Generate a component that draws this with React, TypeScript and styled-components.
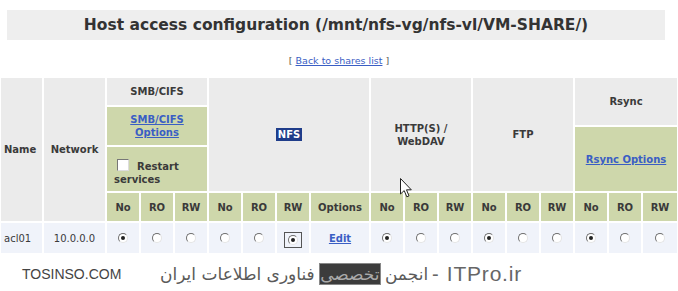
import React from "react";
import styled, { createGlobalStyle } from "styled-components";

const Global = createGlobalStyle`
  html, body { margin: 0; padding: 0; background: #fff; }
  body { font-family: "DejaVu Sans", Verdana, sans-serif; }
`;

const Page = styled.div`
  position: relative;
  width: 678px;
  height: 291px;
  overflow: hidden;
`;

const TitleBar = styled.div`
  margin: 10px 13px 0 7px;
  height: 30px;
  background: #eeeeee;
  display: flex;
  align-items: center;
  justify-content: center;
`;

const Title = styled.h1`
  margin: 0;
  font-size: 15.5px;
  font-weight: bold;
  color: #333;
`;

const BackLine = styled.div`
  margin-top: 14px;
  height: 14px;
  line-height: 14px;
  text-align: center;
  font-size: 9.5px;
  color: #555;
`;

const Link = styled.a<{ $bold?: boolean }>`
  color: #3a5ec4;
  text-decoration: underline;
  font-weight: ${(p) => (p.$bold ? "bold" : "normal")};
  cursor: pointer;
`;

const Grid = styled.div`
  margin-top: 10px;
  padding-left: 1px;
  display: grid;
  grid-template-columns: 41px 61px 32px 32px 32px 32px 32px 32px 58px 32px 32px 32px 32px 32px 32px 32px 32px 34px;
  grid-template-rows: 27px 18px 18px 44px 28px 30px;
  gap: 2px;
`;

type Tone = "gray" | "green" | "data";
const tones: Record<Tone, string> = {
  gray: "#ebebeb",
  green: "#ced7ab",
  data: "#f0f3fa",
};

const Cell = styled.div<{
  $col: string;
  $row: string;
  $tone: Tone;
  $align?: "left" | "center";
  $bold?: boolean;
}>`
  grid-column: ${(p) => p.$col};
  grid-row: ${(p) => p.$row};
  background: ${(p) => tones[p.$tone]};
  display: flex;
  align-items: center;
  justify-content: ${(p) => (p.$align === "left" ? "flex-start" : "center")};
  text-align: ${(p) => p.$align ?? "center"};
  padding: 0 ${(p) => (p.$align === "left" ? "3px" : "0")};
  font-size: 10px;
  line-height: 13px;
  font-weight: ${(p) => (p.$bold === false ? "normal" : "bold")};
  color: #3a3a3a;
  box-sizing: border-box;
`;

const Restart = styled.div`
  width: 100%;
  padding: 7px 0 0 7px;
  text-align: left;
  line-height: 13px;
  box-sizing: border-box;
`;

const Check = styled.span`
  display: inline-block;
  width: 10px;
  height: 10px;
  margin: 0 8px -1px 3px;
  background: #fff;
  border: 1px solid;
  border-color: #777 #ddd #ddd #777;
  vertical-align: baseline;
`;

const Selected = styled.span`
  background: #1f3d8a;
  color: #fff;
  padding: 0 2px;
`;

const Radio = styled.span<{ $on?: boolean }>`
  position: relative;
  display: inline-block;
  width: 10px;
  height: 10px;
  border-radius: 50%;
  border: 1px solid;
  border-color: #6e6e6e #e4e4e4 #e4e4e4 #6e6e6e;
  background: #fff;
  box-sizing: border-box;
  &::after {
    content: "";
    display: ${(p) => (p.$on ? "block" : "none")};
    position: absolute;
    left: 2px;
    top: 2px;
    width: 4px;
    height: 4px;
    border-radius: 50%;
    background: #222;
  }
`;

const FocusBox = styled.span`
  display: inline-flex;
  align-items: center;
  justify-content: center;
  width: 18px;
  height: 16px;
  border: 1px solid #555;
  box-sizing: border-box;
  margin-top: 3px;
`;

const Footer = styled.div`
  margin-top: 9px;
  display: flex;
  align-items: center;
  height: 24px;
  color: #555;
`;

const Brand = styled.span`
  margin-left: 22px;
  width: 138px;
  font-family: "Liberation Sans", Arial, sans-serif;
  font-size: 14px;
  color: #444;
`;

const Persian = styled.span`
  font-family: "DejaVu Sans", sans-serif;
  font-size: 17px;
  color: #5a5a5a;
  white-space: nowrap;
`;

const Mark = styled.span`
  background: #3c3c3c;
  color: #aaa;
  outline: 1px solid #888;
`;

const Dash = styled.span`
  margin-left: 4px;
  font-family: "Liberation Sans", Arial, sans-serif;
  font-size: 20px;
  color: #666;
`;

const Site = styled.span`
  margin-left: 8px;
  font-family: "Liberation Sans", Arial, sans-serif;
  font-size: 21px;
  letter-spacing: 0.8px;
  color: #666;
  white-space: nowrap;
`;

const Cursor = styled.svg`
  position: absolute;
  left: 400px;
  top: 178px;
`;

const subHeads = [
  "No", "RO", "RW",
  "No", "RO", "RW", "Options",
  "No", "RO", "RW",
  "No", "RO", "RW",
  "No", "RO", "RW",
];

type DataCell = { kind: "radio"; on?: boolean; focus?: boolean } | { kind: "edit" };
const dataCells: DataCell[] = [
  { kind: "radio", on: true }, { kind: "radio" }, { kind: "radio" },
  { kind: "radio" }, { kind: "radio" }, { kind: "radio", on: true, focus: true }, { kind: "edit" },
  { kind: "radio", on: true }, { kind: "radio" }, { kind: "radio" },
  { kind: "radio", on: true }, { kind: "radio" }, { kind: "radio" },
  { kind: "radio", on: true }, { kind: "radio" }, { kind: "radio" },
];

export default function App() {
  return (
    <Page>
      <Global />
      <TitleBar>
        <Title>Host access configuration (/mnt/nfs-vg/nfs-vl/VM-SHARE/)</Title>
      </TitleBar>
      <BackLine>
        [ <Link>Back to shares list</Link> ]
      </BackLine>
      <Grid>
        <Cell $col="1" $row="1 / 6" $tone="gray" $align="left">Name</Cell>
        <Cell $col="2" $row="1 / 6" $tone="gray">Network</Cell>
        <Cell $col="3 / 6" $row="1" $tone="gray">SMB/CIFS</Cell>
        <Cell $col="3 / 6" $row="2 / 4" $tone="green">
          <Link $bold>SMB/CIFS<br />Options</Link>
        </Cell>
        <Cell $col="3 / 6" $row="4" $tone="green">
          <Restart>
            <Check />Restart<br />services
          </Restart>
        </Cell>
        <Cell $col="6 / 10" $row="1 / 5" $tone="gray">
          <Selected>NFS</Selected>
        </Cell>
        <Cell $col="10 / 13" $row="1 / 5" $tone="gray">
          HTTP(S) /<br />WebDAV
        </Cell>
        <Cell $col="13 / 16" $row="1 / 5" $tone="gray">FTP</Cell>
        <Cell $col="16 / 19" $row="1 / 3" $tone="gray">Rsync</Cell>
        <Cell $col="16 / 19" $row="3 / 5" $tone="green">
          <Link $bold>Rsync Options</Link>
        </Cell>
        {subHeads.map((h, i) => (
          <Cell key={"h" + i} $col={String(i + 3)} $row="5" $tone="green">
            {h}
          </Cell>
        ))}
        <Cell $col="1" $row="6" $tone="data" $align="left" $bold={false}>acl01</Cell>
        <Cell $col="2" $row="6" $tone="data" $bold={false}>10.0.0.0</Cell>
        {dataCells.map((c, i) => (
          <Cell key={"d" + i} $col={String(i + 3)} $row="6" $tone="data">
            {c.kind === "edit" ? (
              <Link $bold>Edit</Link>
            ) : c.focus ? (
              <FocusBox>
                <Radio $on={c.on} />
              </FocusBox>
            ) : (
              <Radio $on={c.on} />
            )}
          </Cell>
        ))}
      </Grid>
      <Footer>
        <Brand>TOSINSO.COM</Brand>
        <Persian>
          انجمن <Mark>تخصصی</Mark> فناوری اطلاعات ایران
        </Persian>
        <Dash>-</Dash>
        <Site>ITPro.ir</Site>
      </Footer>
      <Cursor width="13" height="20" viewBox="0 0 13 20">
        <path
          d="M0.5 0.5 L0.5 16 L4.2 12.6 L6.8 18.8 L9 17.9 L6.5 11.8 L11.3 11.8 Z"
          fill="#fff"
          stroke="#222"
          strokeWidth="1"
          strokeLinejoin="miter"
        />
      </Cursor>
    </Page>
  );
}
